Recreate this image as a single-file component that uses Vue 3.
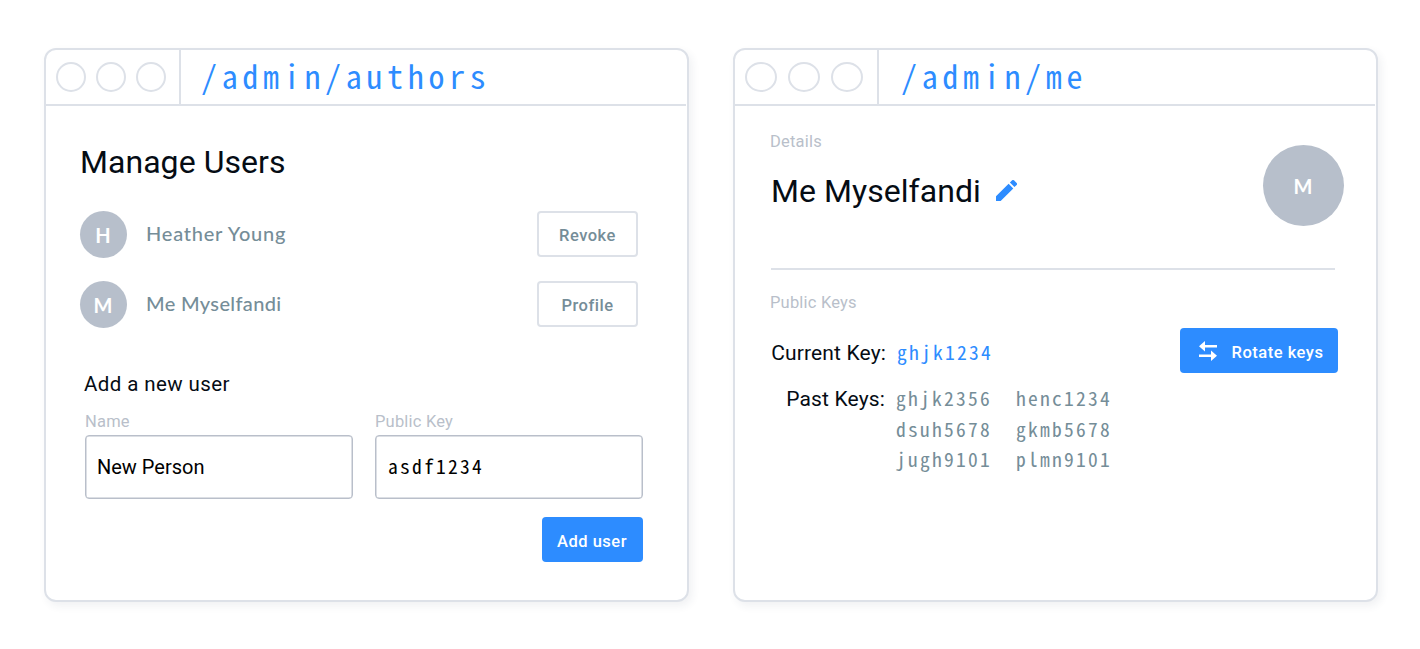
<script setup>
const users = [
  { name: 'Heather Young', initial: 'H', action: 'Revoke' },
  { name: 'Me Myselfandi', initial: 'M', action: 'Profile' },
]
const fields = [
  { label: 'Name', value: 'New Person', mono: false },
  { label: 'Public Key', value: 'asdf1234', mono: true },
]
const pastKeys = ['ghjk2356', 'henc1234', 'dsuh5678', 'gkmb5678', 'jugh9101', 'plmn9101']
</script>

<template>
  <main class="stage">
    <section class="window">
      <header class="bar">
        <div class="dots"><i v-for="n in 3" :key="n" class="dot"></i></div>
        <div class="path">/admin/authors</div>
      </header>
      <div class="authors">
        <h1 class="title">Manage Users</h1>
        <ul class="users">
          <li v-for="u in users" :key="u.name" class="user">
            <span class="avatar">{{ u.initial }}</span>
            <span class="name" :class="'name-' + u.initial">{{ u.name }}</span>
            <button class="outline">{{ u.action }}</button>
          </li>
        </ul>
        <h2 class="subtitle">Add a new user</h2>
        <div class="fields">
          <div v-for="f in fields" :key="f.label" class="field">
            <div class="label">{{ f.label }}</div>
            <div class="input" :class="{ mono: f.mono }">{{ f.value }}</div>
          </div>
        </div>
        <button class="primary add">Add user</button>
      </div>
    </section>

    <section class="window wide">
      <header class="bar">
        <div class="dots"><i v-for="n in 3" :key="n" class="dot"></i></div>
        <div class="path">/admin/me</div>
      </header>
      <div class="me">
        <div class="profile">
          <div>
            <div class="label">Details</div>
            <h1 class="title">
              Me Myselfandi
              <svg class="pencil" viewBox="3 3 18 18"><path fill="#2d8cff" d="M3 17V21h4L17.81 10.2l-4-4L3 17zM20.71 7.2a1.1 1.1 0 0 0 0-1.6l-2.3-2.3a1.1 1.1 0 0 0-1.6 0l-1.9 1.9 3.9 3.9 1.9-1.9z" /></svg>
            </h1>
          </div>
          <span class="avatar large">M</span>
        </div>
        <div class="label keys-label">Public Keys</div>
        <div class="keys">
          <div class="key-list">
            <span class="key-title">Current Key:</span>
            <span class="mono current">ghjk1234</span>
            <span class="key-title past-title">Past Keys:</span>
            <div class="past mono"><span v-for="k in pastKeys" :key="k">{{ k }}</span></div>
          </div>
          <button class="primary rotate">
            <svg class="swap" viewBox="0 0 18 20"><path fill="#fff" d="M6 0v4h12v2.4H6v4L0 5.2zM12 9.6l6 5.2-6 5.2v-4H0v-2.4h12z" /></svg>
            Rotate keys
          </button>
        </div>
      </div>
    </section>
  </main>
</template>

<style>
body { background: #fff; }
</style>

<style scoped>
* { box-sizing: border-box; }
.stage { display: flex; gap: 44px; width: 1420px; height: 649px; padding: 48px 42px 47px 44px; font-family: Roboto, "Liberation Sans", sans-serif; color: #050c14; white-space: nowrap; }
.window { width: 645px; height: 554px; border: 2px solid #dde1e8; border-radius: 12px; background: #fff; box-shadow: 3px 4px 8px rgba(40, 50, 80, .07); }
.bar { display: flex; height: 56px; margin-right: 1px; border-bottom: 2px solid #dde1e8; }
.dots { display: flex; align-items: center; gap: 10px; width: 135px; padding-left: 10px; border-right: 2px solid #dde1e8; }
.dot { width: 30px; height: 30px; border: 2px solid #dde1e8; border-radius: 50%; }
.wide .dots { gap: 11px; width: 144px; }
.wide .dot { width: 32px; }
.path, .mono { font-family: "Noto Sans Mono CJK JP", "Noto Sans CJK JP", "Liberation Mono", monospace; font-feature-settings: "hwid"; font-kerning: none; }
.path { padding-left: 20px; line-height: 50px; font-size: 32px; letter-spacing: 4.68px; color: #2d8cff; }
.wide .path { padding-left: 22px; }
h1, h2, ul { margin: 0; padding: 0; font-weight: 400; list-style: none; }
.title { font-size: 32px; line-height: 40px; letter-spacing: .05px; }
.authors { padding: 36px 44px 0 34px; }
.users { display: grid; gap: 23px; margin-top: 29px; }
.user { display: flex; align-items: center; height: 47px; padding-right: 5px; }
.avatar { display: grid; place-items: center; width: 47px; height: 47px; border-radius: 50%; background: #b7bfcb; color: #fff; font-family: Lato, sans-serif; font-size: 20px; font-weight: 700; line-height: 24px; padding-right: 1px; }
.name { flex: 1; padding: 0 0 3px 19px; font-family: Lato, sans-serif; font-size: 20px; font-weight: 500; letter-spacing: .77px; color: #758d98; }
.name-M { letter-spacing: .35px; }
button { display: flex; align-items: center; justify-content: center; font-family: inherit; font-size: 16.5px; font-weight: 500; letter-spacing: .5px; padding: 0; }
.outline { width: 101px; height: 46px; padding: 3px 0 0 0; margin-top: -1px; border: 2px solid #dde1e8; border-radius: 4px; background: #fff; color: #758d98; }
.subtitle { margin: 44px 0 0 4px; font-size: 20.5px; line-height: 24px; letter-spacing: .4px; }
.fields { display: flex; gap: 22px; margin: 16px 0 0 5px; }
.field { width: 268px; }
.label { font-size: 16.5px; line-height: 20px; letter-spacing: .2px; color: #b9bfca; }
.input { height: 64px; margin-top: 3px; padding-left: 11px; border: 1.5px solid #b9bfca; box-shadow: inset 0 0 0 .5px #b9bfca; border-radius: 4px; font-size: 20px; line-height: 62px; color: #000; }
.mono { font-size: 19.5px; letter-spacing: 2.25px; }
.input.mono { padding-left: 12px; line-height: 60px; }
.primary { height: 45px; border: 0; border-radius: 4px; background: #2d8cff; color: #fff; padding-top: 3px; }
.add { width: 101px; margin: 18px 0 0 auto; padding-right: 1px; }
.me { padding: 26px 38px 0 35px; }
.profile { display: flex; justify-content: space-between; height: 138px; margin: 0 3px 0 1px; border-bottom: 2px solid #dde1e8; }
.profile .label { margin-left: -1px; }
.profile .title { display: flex; align-items: center; margin-top: 19px; letter-spacing: .05px; }
.pencil { width: 21px; height: 21px; margin: -2px 0 0 15px; }
.large { flex: none; width: 81px; height: 81px; margin: 13px -9px 0 0; }
.keys-label { margin-top: 23px; }
.keys { display: flex; justify-content: space-between; margin-top: 15px; }
.key-list { display: grid; grid-template-columns: 117px auto; column-gap: 9px; align-content: start; margin-top: 13px; line-height: 24px; }
.key-title { padding-right: 1px; text-align: right; font-size: 21px; letter-spacing: .15px; }
.current { margin-top: -1px; padding-left: 1px; color: #2d8cff; }
.past-title { margin-top: 22px; padding-right: 2px; }
.past { display: grid; grid-template-columns: auto auto; column-gap: 24px; margin-top: 18px; line-height: 30.5px; color: #758d98; }
.rotate { width: 158px; padding-left: 4px; }
.swap { width: 18px; height: 20px; margin-right: 15px; margin-top: -3px; }
</style>
